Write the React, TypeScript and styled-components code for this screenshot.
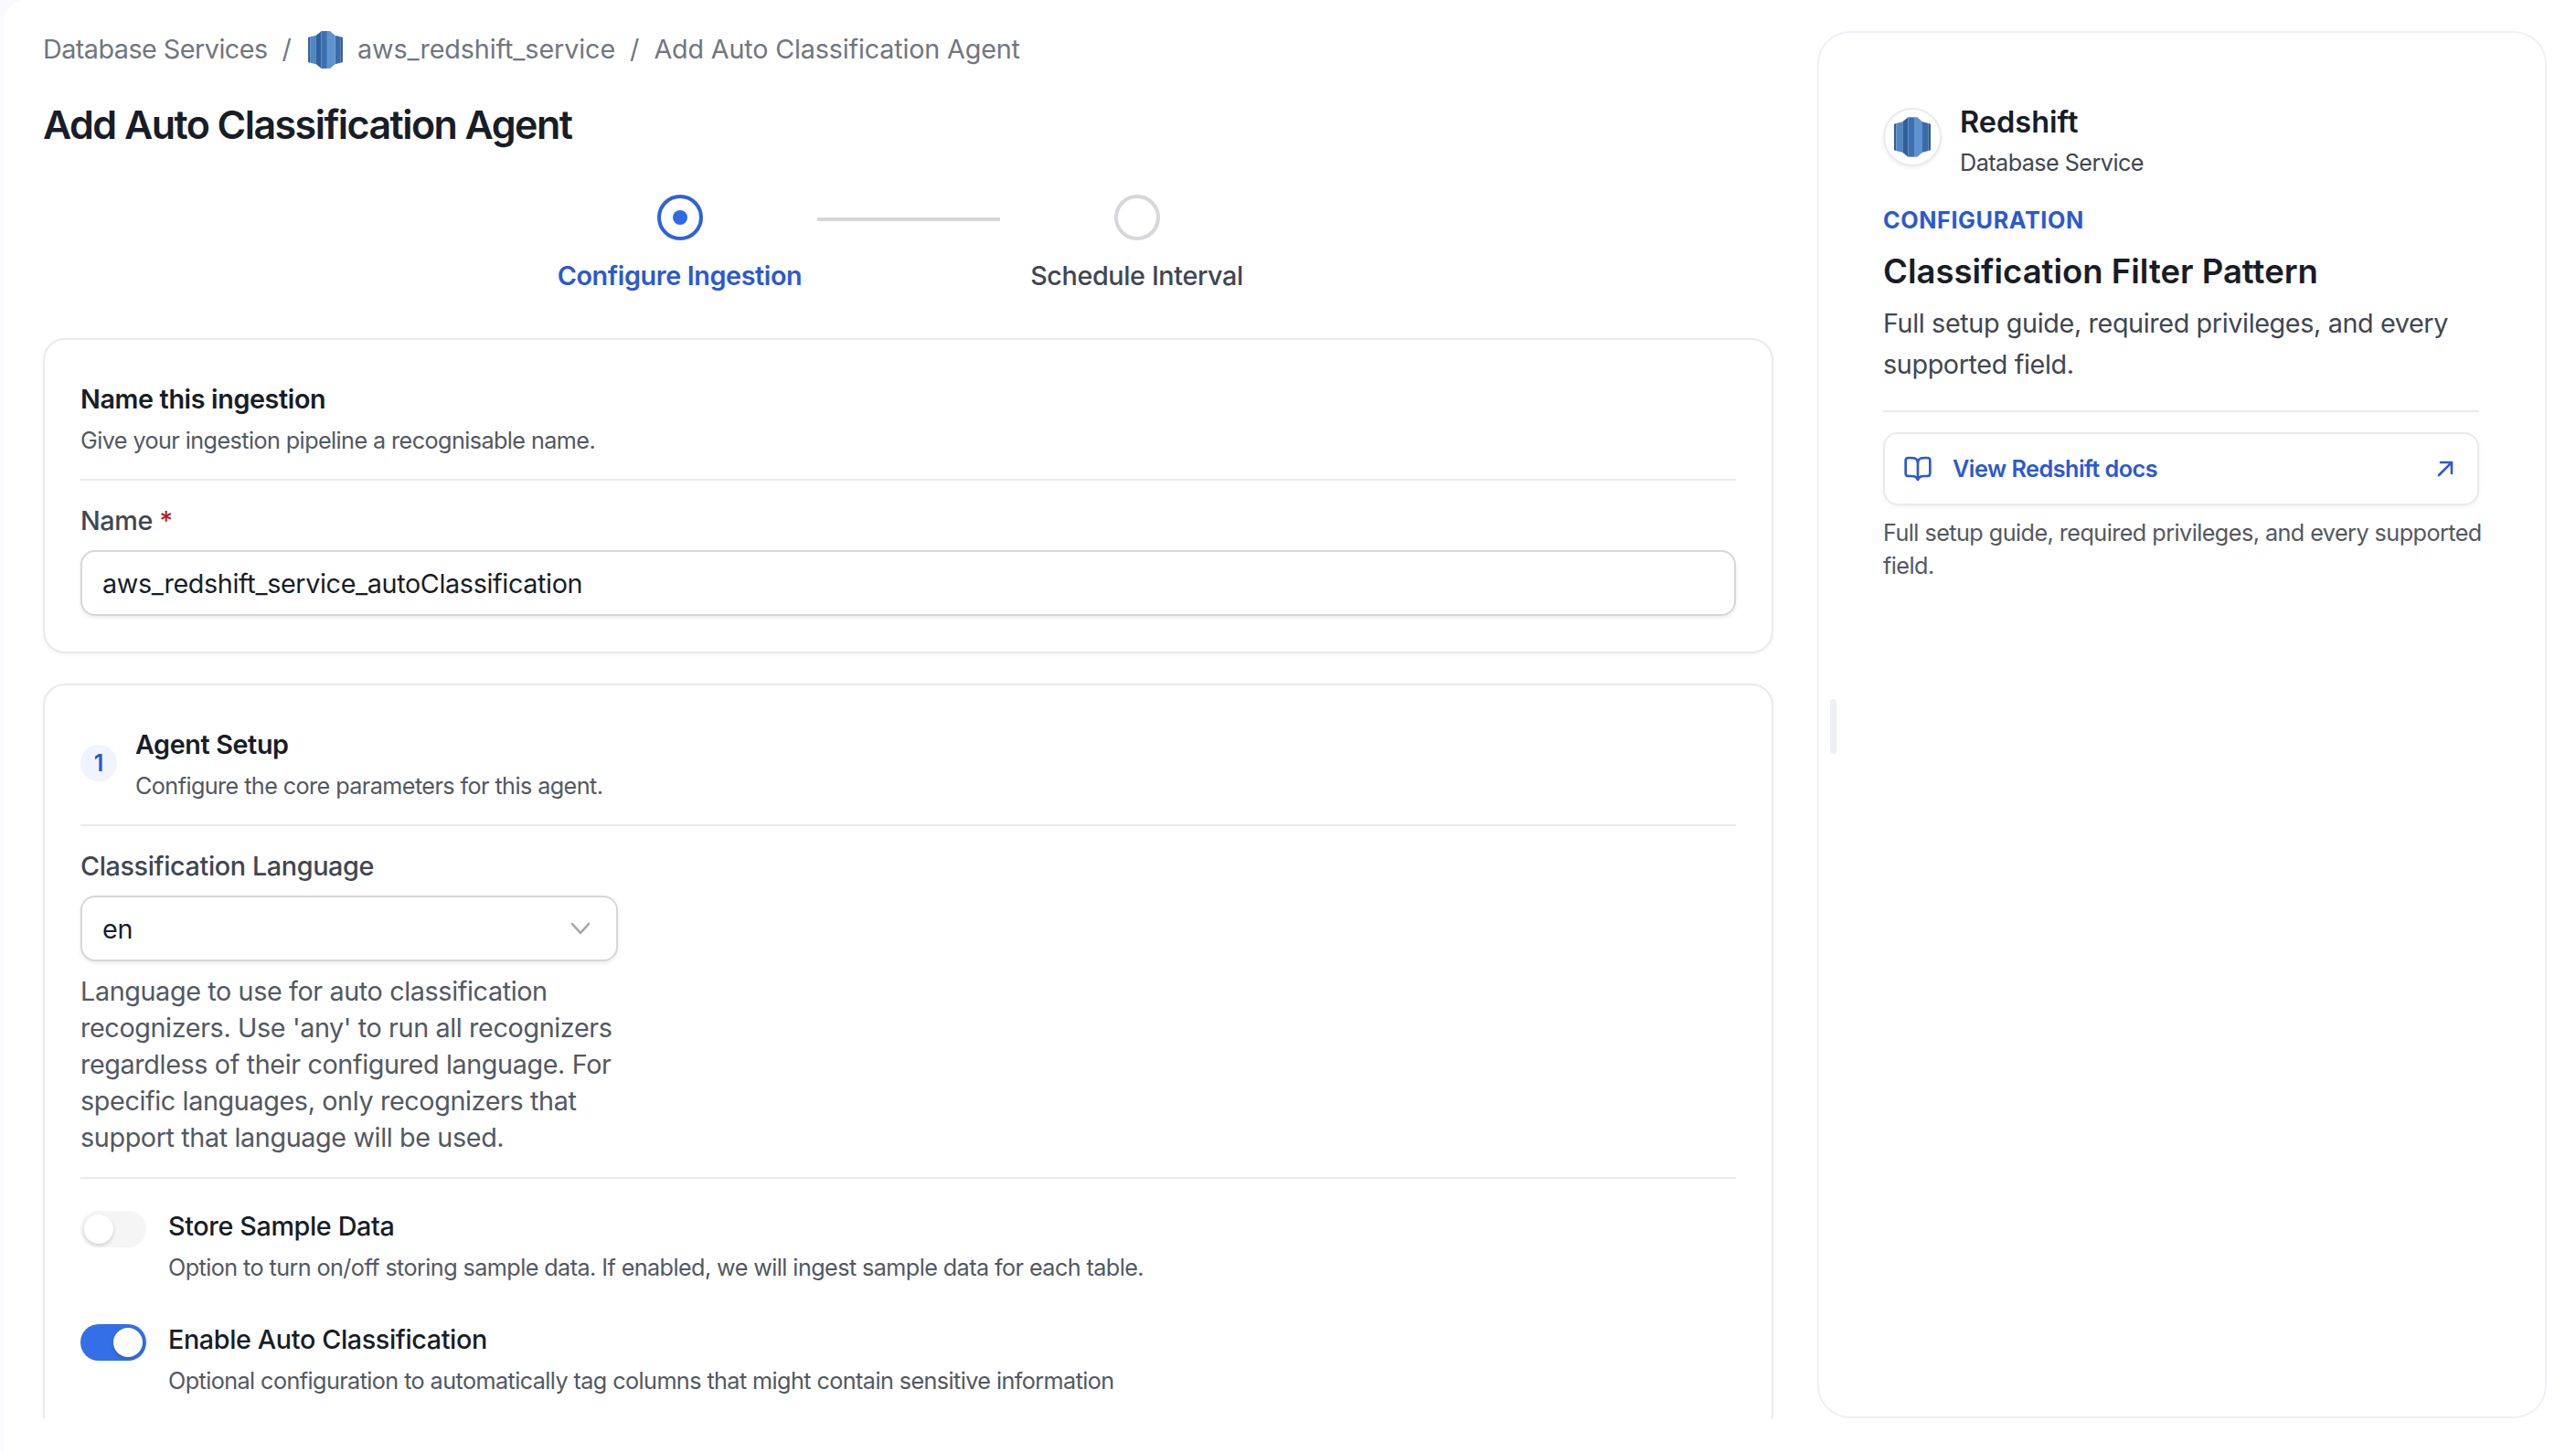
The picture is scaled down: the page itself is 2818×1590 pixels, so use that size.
import React from "react";
import styled, { createGlobalStyle } from "styled-components";

const GlobalStyle = createGlobalStyle`
  html, body {
    margin: 0;
    padding: 0;
    background: #f9f9fe;
  }
  * {
    box-sizing: border-box;
  }
  body {
    font-family: "Inter", "Liberation Sans", sans-serif;
    -webkit-font-smoothing: antialiased;
  }
`;

const Shell = styled.div`
  width: 2818px;
  height: 1590px;
  padding-left: 4px;
  overflow: hidden;
`;

const Frame = styled.div`
  display: flex;
  height: 100%;
  background: #fff;
  border-top-left-radius: 24px;
  padding-bottom: 38px;
`;

const MainColumn = styled.main`
  width: 1936px;
  height: 100%;
  padding: 34px 0 0 43px;
  overflow: hidden;
  flex: none;
`;

const Breadcrumbs = styled.nav`
  display: flex;
  align-items: center;
  gap: 16px;
  height: 40px;
  font-size: 28.75px;
  line-height: 40px;
  color: #717680;
`;

const Crumb = styled.span<{ $tracking?: number }>`
  white-space: nowrap;
  letter-spacing: ${(p) => p.$tracking ?? 0}px;
`;

const CrumbIcon = styled.span`
  display: flex;
  margin-left: 2px;
`;

const Title = styled.h1`
  margin: 34px 0 0;
  font-size: 43px;
  line-height: 56px;
  font-weight: 600;
  letter-spacing: -1.55px;
  color: #181d27;
`;

const Stepper = styled.div`
  display: flex;
  justify-content: center;
  margin: 49px 0 48px;
`;

const Step = styled.div`
  width: 300px;
  display: flex;
  flex-direction: column;
  align-items: center;
`;

const StepRing = styled.div<{ $active?: boolean }>`
  width: 50px;
  height: 50px;
  border-radius: 50%;
  border: 4px solid ${(p) => (p.$active ? "#2f62d9" : "#d5d7da")};
  display: flex;
  align-items: center;
  justify-content: center;
  &::after {
    content: "";
    display: ${(p) => (p.$active ? "block" : "none")};
    width: 16px;
    height: 16px;
    border-radius: 50%;
    background: #2f6ae6;
  }
`;

const StepLabel = styled.div<{ $active?: boolean }>`
  margin-top: 19px;
  font-size: 28.75px;
  line-height: 40px;
  letter-spacing: -0.38px;
  font-weight: ${(p) => (p.$active ? 600 : 500)};
  color: ${(p) => (p.$active ? "#2b59d0" : "#414651")};
  white-space: nowrap;
`;

const StepLine = styled.div`
  width: 200px;
  height: 4px;
  margin-top: 25px;
  background: #d5d7da;
  flex: none;
`;

const Card = styled.section`
  background: #fff;
  border: 2px solid #e9eaeb;
  border-radius: 24px;
  padding: 45px 39px 39px;
  box-shadow: 0 2px 4px rgba(10, 13, 18, 0.04);
  margin-bottom: 33px;
`;

const CardTitle = styled.h2`
  margin: 0;
  font-size: 28.75px;
  line-height: 40px;
  font-weight: 600;
  letter-spacing: -0.38px;
  color: #181d27;
`;

const Muted = styled.p`
  margin: 7px 0 0;
  font-size: 25.2px;
  line-height: 36px;
  letter-spacing: -0.58px;
  color: #535862;
  white-space: nowrap;
`;

const Divider = styled.hr<{ $gap: number; $below?: number }>`
  border: 0;
  height: 2px;
  background: #e9eaeb;
  margin: ${(p) => p.$gap}px 0 ${(p) => p.$below ?? 24}px;
`;

const StepHead = styled.div`
  display: flex;
  align-items: center;
  gap: 20px;
`;

const Badge = styled.div`
  width: 40px;
  height: 40px;
  margin-top: -3px;
  border-radius: 50%;
  background: #eff4ff;
  color: #2b59d0;
  font-size: 25px;
  font-weight: 600;
  display: flex;
  align-items: center;
  justify-content: center;
`;

const FieldLabel = styled.div`
  font-size: 28.75px;
  line-height: 40px;
  font-weight: 500;
  letter-spacing: -0.38px;
  color: #414651;
`;

const Required = styled.span`
  color: #b42318;
`;

const InputBox = styled.div<{ $narrow?: boolean }>`
  display: flex;
  align-items: center;
  justify-content: space-between;
  width: ${(p) => (p.$narrow ? "588px" : "100%")};
  height: 72px;
  margin-top: 12px;
  padding: 0 28px 0 22px;
  background: #fff;
  border: 2px solid #d5d7da;
  border-radius: 16px;
  box-shadow: 0 2px 4px rgba(10, 13, 18, 0.08);
  font-size: 28.75px;
  letter-spacing: -0.37px;
  color: #181d27;
`;

const HelpText = styled.p`
  width: 588px;
  margin: 13px 0 0;
  font-size: 28.75px;
  line-height: 40px;
  letter-spacing: -0.38px;
  color: #535862;
`;

const ToggleRow = styled.div<{ $gap: number }>`
  display: flex;
  gap: 24px;
  margin-top: ${(p) => p.$gap}px;
`;

const Toggle = styled.div<{ $on?: boolean }>`
  position: relative;
  width: 72px;
  height: 40px;
  margin-top: 3px;
  border-radius: 20px;
  background: ${(p) => (p.$on ? "#356fe8" : "#f5f5f5")};
  flex: none;
  &::after {
    content: "";
    position: absolute;
    top: 4px;
    left: ${(p) => (p.$on ? "36px" : "4px")};
    width: 32px;
    height: 32px;
    border-radius: 50%;
    background: #fff;
    box-shadow: 0 2px 4px rgba(10, 13, 18, 0.16);
  }
`;

const ToggleLabel = styled.div`
  font-size: 28.75px;
  line-height: 40px;
  font-weight: 500;
  letter-spacing: -0.38px;
  color: #181d27;
`;

const SidePanel = styled.aside`
  position: relative;
  width: 798px;
  margin: 34px 0 0 48px;
  padding: 76px 72px 0 70px;
  background: #fff;
  border: 2px solid #eef0f6;
  border-radius: 36px;
  flex: none;
`;

const ResizeGrip = styled.div`
  position: absolute;
  left: 12px;
  top: 729px;
  width: 7px;
  height: 60px;
  border-radius: 4px;
  background: #eeeff2;
`;

const ServiceHead = styled.div`
  display: flex;
  gap: 20px;
`;

const LogoCircle = styled.div`
  width: 64px;
  height: 64px;
  margin-top: 6px;
  border-radius: 50%;
  border: 2px solid #e9eaeb;
  box-shadow: 0 2px 4px rgba(10, 13, 18, 0.06);
  display: flex;
  align-items: center;
  justify-content: center;
  flex: none;
`;

const ServiceName = styled.div`
  font-size: 32.5px;
  line-height: 44px;
  font-weight: 600;
  color: #181d27;
`;

const ServiceKind = styled.div`
  font-size: 25.2px;
  line-height: 36px;
  margin-top: 4px;
  letter-spacing: -0.55px;
  color: #414651;
`;

const Eyebrow = styled.div`
  margin-top: 27px;
  font-size: 25.2px;
  line-height: 36px;
  font-weight: 700;
  letter-spacing: 0.6px;
  color: #2b59d0;
`;

const PanelTitle = styled.h3`
  margin: 13px 0 0;
  font-size: 36.5px;
  line-height: 50px;
  font-weight: 600;
  color: #181d27;
`;

const PanelBody = styled.p`
  margin: 9px 0 0;
  font-size: 28.75px;
  line-height: 45px;
  letter-spacing: -0.38px;
  color: #414651;
`;

const DocsLink = styled.a`
  display: flex;
  align-items: center;
  height: 80px;
  padding: 0 26px 0 20px;
  gap: 22px;
  border: 2px solid #e9eaeb;
  border-radius: 16px;
  box-shadow: 0 2px 4px rgba(10, 13, 18, 0.05);
  color: #2b59d0;
  font-size: 25.2px;
  font-weight: 600;
  letter-spacing: -0.5px;
  svg {
    flex: none;
  }
  span {
    flex: 1;
  }
`;

const Note = styled.p`
  margin: 12px 0 0;
  font-size: 25.2px;
  line-height: 36px;
  letter-spacing: -0.55px;
  color: #535862;
  white-space: nowrap;
`;

const RedshiftLogo = ({ width, height }: { width: number; height: number }) => (
  <svg width={width} height={height} viewBox="0 0 120 130">
    <path d="M0 22l7-2v90l-7-2z" fill="#2f5f99" />
    <path d="M7 20l21-5v100l-21-5z" fill="#4f86c4" />
    <path d="M93 15l20 5v90l-20 5z" fill="#3b6ba8" />
    <path d="M113 20l7 2v86l-7 2z" fill="#2f5c96" />
    <path d="M28 15L46 0v130L28 115z" fill="#316099" />
    <path d="M46 0h20v130H46z" fill="#3d70b0" />
    <path d="M66 0h10l17 15v100l-17 15H66z" fill="#5f93d0" />
  </svg>
);

const DocsIcon = () => (
  <svg width="32" height="32" viewBox="0 0 24 24" fill="none" stroke="currentColor" strokeWidth="2" strokeLinecap="round" strokeLinejoin="round">
    <path d="M12 21l-.1-.15c-.69-1.04-1.04-1.56-1.5-1.94A4 4 0 0 0 9 18.18C8.46 18 7.83 18 6.58 18H5.2c-1.12 0-1.68 0-2.1-.22a2 2 0 0 1-.88-.87C2 16.48 2 15.92 2 14.8V6.2c0-1.12 0-1.68.22-2.1a2 2 0 0 1 .87-.88C3.52 3 4.08 3 5.2 3h.4c2.24 0 3.36 0 4.22.44a4 4 0 0 1 1.74 1.74C12 6.04 12 7.16 12 9.4M12 21V9.4M12 21l.1-.15c.69-1.04 1.04-1.56 1.5-1.94a4 4 0 0 1 1.38-.74c.55-.17 1.18-.17 2.43-.17h1.39c1.12 0 1.68 0 2.1-.22a2 2 0 0 0 .88-.87c.22-.43.22-.99.22-2.11V6.2c0-1.12 0-1.68-.22-2.1a2 2 0 0 0-.87-.88C20.48 3 19.92 3 18.8 3h-.4c-2.24 0-3.36 0-4.22.44a4 4 0 0 0-1.74 1.74C12 6.04 12 7.16 12 9.4" />
  </svg>
);

const ExternalArrow = () => (
  <svg width="18" height="18" viewBox="0 0 18 18" fill="none" stroke="currentColor" strokeWidth="2.6" strokeLinecap="round" strokeLinejoin="round">
    <path d="M2 16L16 2M4 2h12v12" />
  </svg>
);

const SelectChevron = () => (
  <svg width="22" height="14" viewBox="0 0 22 14" fill="none" stroke="#a4a7ae" strokeWidth="2.6" strokeLinecap="round" strokeLinejoin="round">
    <path d="M2 2l9 10 9-10" />
  </svg>
);

export default function App() {
  return (
    <Shell>
      <GlobalStyle />
      <Frame>
        <MainColumn>
          <Breadcrumbs>
            <Crumb $tracking={-0.53}>Database Services</Crumb>
            <Crumb>/</Crumb>
            <CrumbIcon>
              <RedshiftLogo width={38} height={41} />
            </CrumbIcon>
            <Crumb $tracking={-0.12}>aws_redshift_service</Crumb>
            <Crumb>/</Crumb>
            <Crumb $tracking={-0.18}>Add Auto Classification Agent</Crumb>
          </Breadcrumbs>
          <Title>Add Auto Classification Agent</Title>

          <Stepper>
            <Step>
              <StepRing $active />
              <StepLabel $active>Configure Ingestion</StepLabel>
            </Step>
            <StepLine />
            <Step>
              <StepRing />
              <StepLabel>Schedule Interval</StepLabel>
            </Step>
          </Stepper>

          <Card>
            <CardTitle>Name this ingestion</CardTitle>
            <Muted>Give your ingestion pipeline a recognisable name.</Muted>
            <Divider $gap={24} />
            <FieldLabel>
              Name <Required>*</Required>
            </FieldLabel>
            <InputBox>aws_redshift_service_autoClassification</InputBox>
          </Card>

          <Card>
            <StepHead>
              <Badge>1</Badge>
              <div>
                <CardTitle>Agent Setup</CardTitle>
                <Muted>Configure the core parameters for this agent.</Muted>
              </div>
            </StepHead>
            <Divider $gap={24} />
            <FieldLabel>Classification Language</FieldLabel>
            <InputBox $narrow>
              en
              <SelectChevron />
            </InputBox>
            <HelpText>
              Language to use for auto classification recognizers. Use 'any' to run all recognizers regardless of their
              configured language. For specific languages, only recognizers that support that language will be used.
            </HelpText>
            <Divider $gap={23} />
            <ToggleRow $gap={32}>
              <Toggle />
              <div>
                <ToggleLabel>Store Sample Data</ToggleLabel>
                <Muted>Option to turn on/off storing sample data. If enabled, we will ingest sample data for each table.</Muted>
              </div>
            </ToggleRow>
            <ToggleRow $gap={41}>
              <Toggle $on />
              <div>
                <ToggleLabel>Enable Auto Classification</ToggleLabel>
                <Muted>Optional configuration to automatically tag columns that might contain sensitive information</Muted>
              </div>
            </ToggleRow>
          </Card>
        </MainColumn>

        <SidePanel>
          <ResizeGrip />
          <ServiceHead>
            <LogoCircle>
              <RedshiftLogo width={40} height={44} />
            </LogoCircle>
            <div>
              <ServiceName>Redshift</ServiceName>
              <ServiceKind>Database Service</ServiceKind>
            </div>
          </ServiceHead>
          <Eyebrow>CONFIGURATION</Eyebrow>
          <PanelTitle>Classification Filter Pattern</PanelTitle>
          <PanelBody>Full setup guide, required privileges, and every supported field.</PanelBody>
          <Divider $gap={28} $below={22} />
          <DocsLink>
            <DocsIcon />
            <span>View Redshift docs</span>
            <ExternalArrow />
          </DocsLink>
          <Note>
            Full setup guide, required privileges, and every supported
            <br />
            field.
          </Note>
        </SidePanel>
      </Frame>
    </Shell>
  );
}
